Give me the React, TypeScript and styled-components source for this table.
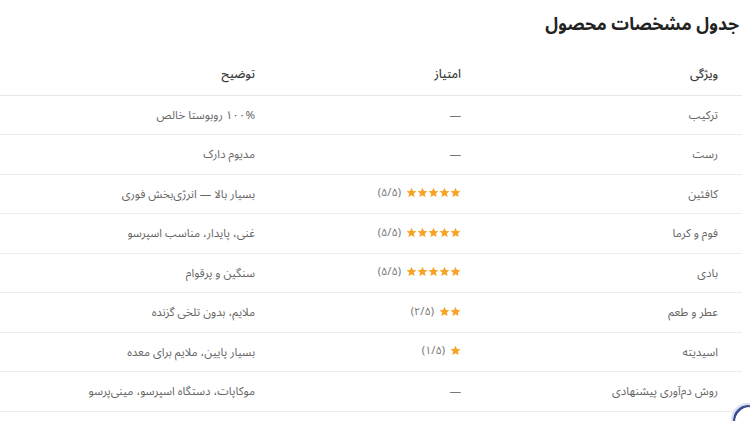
import React from "react";
import styled, { createGlobalStyle } from "styled-components";

const GlobalStyle = createGlobalStyle`
  body {
    margin: 0;
    background: #ffffff;
    font-family: "Noto Sans Arabic", "DejaVu Sans", sans-serif;
    overflow: hidden;
  }
  * {
    box-sizing: border-box;
  }
`;

const Page = styled.div`
  direction: rtl;
  width: 742px;
  padding-top: 10px;
`;

const Title = styled.h2`
  margin: 0 3px 0 0;
  font-size: 17.5px;
  line-height: 30px;
  font-weight: 700;
  color: #222;
`;

const Table = styled.table`
  width: 742px;
  margin-top: 15px;
  border-collapse: collapse;
  table-layout: fixed;
`;

const HeadCell = styled.th<{ $width: number }>`
  width: ${(p) => p.$width}px;
  height: 40px;
  padding: 0 24px;
  text-align: right;
  font-size: 12px;
  font-weight: 500;
  color: #3a3a3a;
  border-bottom: 1.5px solid #e6e6e6;
`;

const Cell = styled.td`
  height: 39.5px;
  padding: 0 24px;
  text-align: right;
  font-size: 11.5px;
  color: #666;
  border-bottom: 1.5px solid #ececec;
  white-space: nowrap;
`;

const Rating = styled.span`
  display: inline-flex;
  align-items: center;
  gap: 5px;
`;

const Stars = styled.span`
  display: inline-flex;
  align-items: center;
`;

const Score = styled.span`
  color: #777;
  font-size: 11px;
`;

const Dash = styled.span`
  color: #777;
`;

const FloatButton = styled.div`
  position: fixed;
  left: 731px;
  top: 403px;
  width: 34px;
  height: 34px;
  border-radius: 50%;
  border: 2px solid #d8dcef;
  box-shadow: inset 2px 2px 0 #3b4c8c;
  background: #fff;
`;

const Star = () => (
  <svg width="11" height="11" viewBox="0 0 24 24">
    <path
      d="M12 1.5l3.2 7.1 7.6.7-5.8 5.1 1.8 7.6L12 18l-6.8 4 1.8-7.6L1.2 9.3l7.6-.7z"
      fill="#f7a325"
    />
  </svg>
);

type Row = { feature: string; stars: number; desc: string };

const rows: Row[] = [
  { feature: "ترکیب", stars: 0, desc: "۱۰۰% روبوستا خالص" },
  { feature: "رست", stars: 0, desc: "مدیوم دارک" },
  { feature: "کافئین", stars: 5, desc: "بسیار بالا — انرژی‌بخش فوری" },
  { feature: "فوم و کرما", stars: 5, desc: "غنی، پایدار، مناسب اسپرسو" },
  { feature: "بادی", stars: 5, desc: "سنگین و پرقوام" },
  { feature: "عطر و طعم", stars: 2, desc: "ملایم، بدون تلخی گزنده" },
  { feature: "اسیدیته", stars: 1, desc: "بسیار پایین، ملایم برای معده" },
  { feature: "روش دم‌آوری پیشنهادی", stars: 0, desc: "موکاپات، دستگاه اسپرسو، مینی‌پرسو" },
];

const faDigits = (n: number) => "۰۱۲۳۴۵۶۷۸۹"[n];

export default function App() {
  return (
    <>
      <GlobalStyle />
      <Page>
        <Title>جدول مشخصات محصول</Title>
        <Table>
          <thead>
            <tr>
              <HeadCell $width={257}>ویژگی</HeadCell>
              <HeadCell $width={206}>امتیاز</HeadCell>
              <HeadCell $width={279}>توضیح</HeadCell>
            </tr>
          </thead>
          <tbody>
            {rows.map((r) => (
              <tr key={r.feature}>
                <Cell>{r.feature}</Cell>
                <Cell>
                  {r.stars > 0 ? (
                    <Rating>
                      <Stars>
                        {Array.from({ length: r.stars }, (_, i) => (
                          <Star key={i} />
                        ))}
                      </Stars>
                      <Score>({faDigits(r.stars)}/۵)</Score>
                    </Rating>
                  ) : (
                    <Dash>—</Dash>
                  )}
                </Cell>
                <Cell>{r.desc}</Cell>
              </tr>
            ))}
          </tbody>
        </Table>
      </Page>
      <FloatButton />
    </>
  );
}
